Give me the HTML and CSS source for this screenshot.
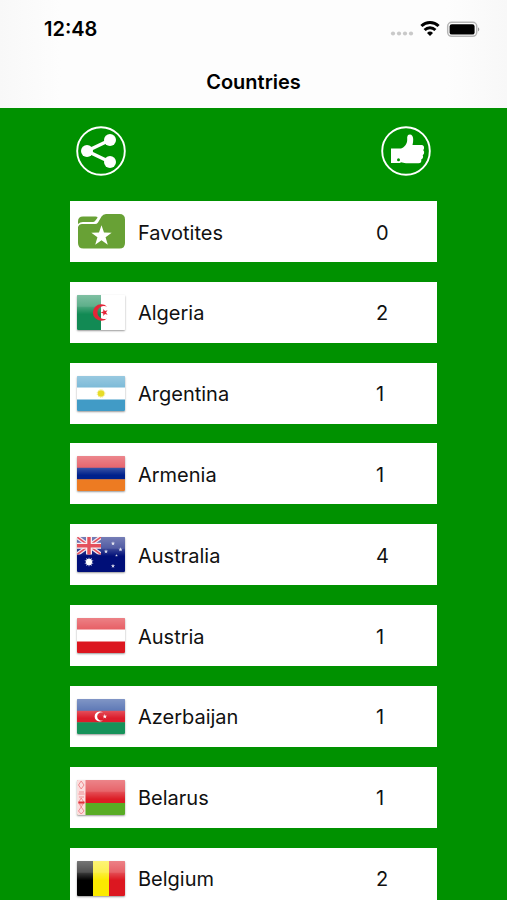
FILE: index.html
```html
<!DOCTYPE html>
<html lang="en">
<head>
<meta charset="utf-8">
<meta name="viewport" content="width=device-width, initial-scale=1">
<title>Countries</title>
<link rel="stylesheet" href="styles.css">
</head>
<body>
<div class="screen">
  <header class="header">
    <div class="status">
      <time class="clock">12:48</time>
      <svg class="indicators" viewBox="0 0 92 20" aria-hidden="true">
        <g fill="#c9c9c9"><circle cx="4" cy="14.500" r="2.100"/><circle cx="10" cy="14.500" r="2.100"/><circle cx="16" cy="14.500" r="2.100"/><circle cx="22" cy="14.500" r="2.100"/></g>
        <g fill="none" stroke="#000" stroke-width="3"><path d="M32.400 7a12.300 12.300 0 0 1 17.200 0"/><path d="M35.600 11a7.700 7.700 0 0 1 10.800 0"/></g>
        <path d="M38 14a4.300 4.300 0 0 1 6 0L41 17z"/>
        <rect x="58.700" y="3.300" width="29" height="14" rx="4" fill="#fff" stroke="#b5b5b5" stroke-width="1.500"/>
        <rect x="60.600" y="5.200" width="25" height="10.400" rx="2.200"/>
        <path d="M89 8.200q2.600 2.100 0 4.200z" fill="#999"/>
      </svg>
    </div>
    <h1 class="title">Countries</h1>
  </header>
  <main class="content">
    <div class="actions">
      <button class="round" type="button" aria-label="Share">
        <svg viewBox="0 0 50 50"><circle cx="25" cy="25" r="23.800" fill="none" stroke="#fff" stroke-width="1.900"/><path d="M34 14 11 25 34 36" fill="none" stroke="#fff" stroke-width="3.500"/><g fill="#fff"><circle cx="34" cy="14" r="6"/><circle cx="11" cy="25" r="6"/><circle cx="34" cy="36" r="6"/></g></svg>
      </button>
      <button class="round" type="button" aria-label="Like">
        <svg viewBox="0 0 50 50"><circle cx="25" cy="25" r="23.800" fill="none" stroke="#fff" stroke-width="1.900"/><path fill="#fff" d="M10 22.500H20C23.500 21.500 26.200 17.500 26.200 14V11Q26.500 8.500 29 8.600Q31.800 8.800 32.200 13Q32.300 16.500 31.500 19H41Q43.500 19.500 43 22.500Q42.700 23.500 42.200 24Q43.700 25.500 43 27.500Q42.500 28.700 41.700 29Q42.700 31 41.500 32.500Q41 33.200 40.200 33.500Q41 37 37.500 37.300H25Q22 36.800 20 36.300L19 37H10z"/><circle cx="17.500" cy="33.800" r="1.500" fill="#009100"/></svg>
      </button>
    </div>
    <svg class="defs" aria-hidden="true"><defs>
      <linearGradient id="shine" x1="0" y1="0" x2="0" y2="1"><stop offset="0" stop-color="#fff" stop-opacity=".46"/><stop offset=".32" stop-color="#fff" stop-opacity=".32"/><stop offset=".36" stop-color="#fff" stop-opacity=".2"/><stop offset=".55" stop-color="#fff" stop-opacity="0"/></linearGradient>
      <path id="star" d="M0-1 .235-.324.951-.309.380.124.588.809 0 .4-.588.809-.380.124-.951-.309-.235-.324z"/>
    </defs></svg>
    <ul class="list">
      <li><a class="card" href="#favorites">
        <svg class="icon" viewBox="0 0 48 35"><path fill="#68a135" d="M1 7.500Q1 2.500 6 2.500H18.500Q21.500 2.500 20 4.500L18 7Q17.300 8 16 8H6Q3 8 1 10z"/><path fill="#68a135" d="M1 13Q2 10 5 10H18Q20 10 21 8.500L24.500 2.500Q26 0 29 0H42.500Q48 0 48 5.500V29Q48 34.500 42.500 34.500H6.500Q1 34.500 1 29z"/><use href="#star" transform="translate(24.500 22) scale(10.700)" fill="#fff"/></svg>
        <span class="name">Favotites</span><span class="count">0</span></a></li>
      <li><a class="card" href="#algeria">
        <svg class="icon flag" viewBox="0 0 48 35"><path fill="#fff" d="M0 0h48v35H0z"/><path fill="#128a54" d="M0 0h24v35H0z"/><path fill="url(#shine)" d="M0 0h48v35H0z"/><path fill="#e32638" d="M30 11.600A8.300 8.300 0 1 0 30 23.400A6.600 6.600 0 1 1 30 11.600z"/><use href="#star" transform="translate(27.500 17.500) rotate(-90) scale(3.800)" fill="#e32638"/></svg>
        <span class="name">Algeria</span><span class="count">2</span></a></li>
      <li><a class="card" href="#argentina">
        <svg class="icon flag" viewBox="0 0 48 35"><path fill="#419bc6" d="M0 0h48v35H0z"/><path fill="#fff" d="M0 11.500h48v12H0z"/><path fill="url(#shine)" d="M0 0h48v35H0z"/><circle cx="24" cy="17.500" r="3.300" fill="#e7dc28"/><circle cx="24" cy="17.500" r="3.800" fill="none" stroke="#efe56c" stroke-dasharray="1 1"/></svg>
        <span class="name">Argentina</span><span class="count">1</span></a></li>
      <li><a class="card" href="#armenia">
        <svg class="icon flag" viewBox="0 0 48 35"><path fill="#dc1f2b" d="M0 0h48v12H0z"/><path fill="#00218c" d="M0 11.700h48v12H0z"/><path fill="#ed7b22" d="M0 23.300h48V35H0z"/><path fill="url(#shine)" d="M0 0h48v35H0z"/></svg>
        <span class="name">Armenia</span><span class="count">1</span></a></li>
      <li><a class="card" href="#australia">
        <svg class="icon flag" viewBox="0 0 48 35"><path fill="#000f78" d="M0 0h48v35H0z"/><path fill="url(#shine)" d="M0 0h48v35H0z"/><svg width="24" height="17.500" viewBox="0 0 24 17.500"><path d="M0 0 24 17.500M24 0 0 17.500" stroke="#f3e6ee" stroke-width="4"/><path d="M0 0 24 17.500M24 0 0 17.500" stroke="#e4505c" stroke-width="1.500"/><path d="M12 0v18M0 8.700h24" stroke="#f8eef2" stroke-width="6"/><path d="M12 0v18M0 8.700h24" stroke="#e4505c" stroke-width="3.400"/></svg><g fill="#fff"><use href="#star" transform="translate(12 25) scale(4.800)"/><use href="#star" transform="translate(12 25) rotate(180) scale(4.800)"/><circle cx="12" cy="25" r="3"/><g opacity=".85"><use href="#star" transform="translate(36 6.500) scale(2.200)"/><use href="#star" transform="translate(29 14.500) scale(2.200)"/><use href="#star" transform="translate(43.500 12.500) scale(2.200)"/><use href="#star" transform="translate(39.500 18.500) scale(1.400)"/><use href="#star" transform="translate(36 29) scale(2.200)"/></g></g></svg>
        <span class="name">Australia</span><span class="count">4</span></a></li>
      <li><a class="card" href="#austria">
        <svg class="icon flag" viewBox="0 0 48 35"><path fill="#dc161f" d="M0 0h48v35H0z"/><path fill="#fff" d="M0 11.500h48v12H0z"/><path fill="url(#shine)" d="M0 0h48v35H0z"/></svg>
        <span class="name">Austria</span><span class="count">1</span></a></li>
      <li><a class="card" href="#azerbaijan">
        <svg class="icon flag" viewBox="0 0 48 35"><path fill="#153c95" d="M0 0h48v12H0z"/><path fill="#dc1c2b" d="M0 11.700h48v12H0z"/><path fill="#16925a" d="M0 23.300h48V35H0z"/><path fill="url(#shine)" d="M0 0h48v35H0z"/><path fill="#fff" d="M26 13.800A5 5 0 1 0 26 21.200A4.100 4.100 0 1 1 26 13.800z"/><use href="#star" transform="translate(27.800 17.500) scale(2.400)" fill="#fff"/></svg>
        <span class="name">Azerbaijan</span><span class="count">1</span></a></li>
      <li><a class="card" href="#belarus">
        <svg class="icon flag" viewBox="0 0 48 35"><path fill="#dc1c25" d="M0 0h48v24H0z"/><path fill="#58ac24" d="M0 23h48v12H0z"/><path fill="url(#shine)" d="M0 0h48v35H0z"/><path fill="#fbdede" d="M0 0h8.500v35H0z"/><g fill="none" stroke="#ee8288" stroke-width=".9"><path d="M4.200 1 7 5 4.200 9 1.500 5zM4.200 18 7 22.500 4.200 27 1.500 22.500zM4.200 27 7 31 4.200 34 1.500 31z"/><path d="M2 12h5M1.500 14h6M2 17h5M3 24h3"/><path d="M1.500 22.500h6" stroke="#dd3039" stroke-width="2"/></g></svg>
        <span class="name">Belarus</span><span class="count">1</span></a></li>
      <li><a class="card" href="#belgium">
        <svg class="icon flag" viewBox="0 0 48 35"><path d="M0 0h16v35H0z"/><path fill="#fbea00" d="M16 0h16v35H16z"/><path fill="#dc1720" d="M32 0h16v35H32z"/><path fill="url(#shine)" d="M0 0h48v35H0z"/></svg>
        <span class="name">Belgium</span><span class="count">2</span></a></li>
    </ul>
  </main>
</div>
</body>
</html>
```
FILE: styles.css
```css
* { box-sizing: border-box; }

body {
  margin: 0;
  background: #009100;
  color: #111;
  font-family: Inter, "Liberation Sans", sans-serif;
}

.screen {
  display: flex;
  flex-direction: column;
  height: 100vh;
}

.header {
  flex: none;
  padding: 17px 26px 12px 44px;
  background: linear-gradient(90deg, #f8f8f8, #fdfdfd 12%, #fdfdfd 88%, #f8f8f8);
  color: #000;
}

.status {
  display: flex;
  align-items: center;
  justify-content: space-between;
  height: 24px;
}

.clock {
  font-size: 20px;
  font-weight: 600;
  line-height: 24px;
}

.indicators {
  width: 92px;
  height: 20px;
}

.title {
  margin: 27px 0 0 -18px;
  font-size: 20px;
  font-weight: 600;
  line-height: 28px;
  text-align: center;
}

.content {
  flex: 1;
  min-height: 0;
  padding: 18px 13.8% 0;
  overflow-y: auto;
  scrollbar-width: none;
}

.actions {
  display: flex;
  justify-content: space-between;
  padding: 0 6px;
}

.round {
  width: 50px;
  height: 50px;
  padding: 0;
  border: 0;
  border-radius: 50%;
  background: none;
}

.round svg { display: block; }

.defs {
  position: absolute;
  width: 0;
  height: 0;
}

.list {
  margin: 25px 0 0;
  padding: 0;
  list-style: none;
}

.list li { margin-bottom: 5.4%; }

.card {
  display: flex;
  align-items: center;
  height: 61px;
  padding: 0 7px;
  background: #fff;
  color: inherit;
  font-size: 20px;
  text-decoration: none;
}

.icon {
  flex: none;
  width: 48px;
  height: 35px;
}

.flag {
  border-radius: 1px;
  box-shadow: 0 1px 2px #0006;
}

.name,
.count { padding-top: 2px; }

.name {
  flex: 1;
  margin-left: 13px;
}

.count { width: 54px; }
```
